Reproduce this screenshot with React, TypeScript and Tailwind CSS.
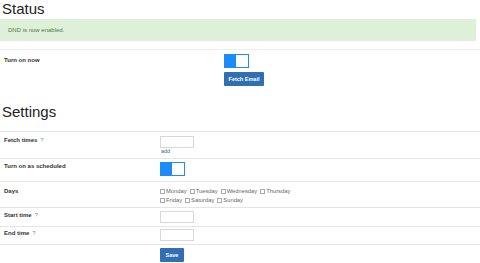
import React from "react";

const font = { fontFamily: '"Liberation Sans", Arial, sans-serif' };

function Toggle() {
  return (
    <div className="flex h-[14px] w-[25px] border border-[#1d8cf8] bg-white">
      <div className="w-[11px] bg-[#1d8cf8]" />
      <div className="flex-1" />
    </div>
  );
}

function Help() {
  return <span className="ml-[3px] font-normal text-[#7a8fa8]">?</span>;
}

function Row({ label, help, children, cls }: { label: string; help?: boolean; children: React.ReactNode; cls?: string }) {
  return (
    <div className={`flex border-t border-[#e5e5e5] ${cls ?? ""}`}>
      <div className="w-[160px] shrink-0 pl-[4px] text-[6px] font-bold text-[#333]">
        {label}
        {help && <Help />}
      </div>
      <div className="flex flex-col items-start text-[6px]">{children}</div>
    </div>
  );
}

function Input() {
  return <div className="h-[12px] w-[34px] border border-[#d8d8d8] bg-white" />;
}

function Check({ label }: { label: string }) {
  return (
    <span className="mr-[3px] inline-flex items-center">
      <span className="mr-[1px] inline-block h-[5px] w-[5px] border border-[#aaa]" />
      {label}
    </span>
  );
}

export default function App() {
  return (
    <div className="h-[263px] w-[480px] overflow-hidden bg-white text-[#333]" style={font}>
      <h1 className="pl-[2px] pt-[1px] text-[15px] leading-[16px] text-[#222]">Status</h1>
      <div className="mt-[2px] mr-[4px] h-[22px] bg-[#dff0d8] pl-[8px] text-[6px] leading-[22px] text-[#4a7a4a]">
        DND is now enabled.
      </div>
      <div className="mt-[8px] flex border-t border-[#eeeeee] pt-[6px]">
        <div className="w-[224px] shrink-0 pl-[4px] text-[6px] font-bold">Turn on now</div>
        <div className="-mt-[2px] flex flex-col gap-[4px]">
          <Toggle />
          <button className="h-[14px] w-[40px] rounded-[1px] bg-[#2f6fb2] text-[5.5px] font-bold text-white">
            Fetch Email
          </button>
        </div>
      </div>

      <h2 className="mt-[18px] pl-[2px] text-[15px] leading-[16px] text-[#222]">Settings</h2>
      <div className="mt-[11px]">
        <Row label="Fetch times" help cls="pt-[4px] h-[27px]">
          <Input />
          <div className="-mt-[1px] pl-[1px] text-[5.5px] leading-[8px] text-[#3a64a8]">add</div>
        </Row>
        <Row label="Turn on as scheduled" help={false} cls="pt-[3px] h-[23px]">
          <Toggle />
        </Row>
        <Row label="Days" cls="pt-[5px] h-[26px]">
          <div className="text-[5.8px] leading-[8.5px] text-[#666]">
            <div>
              <Check label="Monday" />
              <Check label="Tuesday" />
              <Check label="Wednesday" />
              <Check label="Thursday" />
            </div>
            <div>
              <Check label="Friday" />
              <Check label="Saturday" />
              <Check label="Sunday" />
            </div>
          </div>
        </Row>
        <Row label="Start time" help cls="pt-[3px] h-[19px]">
          <Input />
        </Row>
        <Row label="End time" help cls="pt-[2px] h-[18px]">
          <Input />
        </Row>
        <Row label="" cls="pt-[3px]">
          <button className="h-[14px] w-[24px] rounded-[1px] bg-[#2f6fb2] text-[5.5px] font-bold text-white">
            Save
          </button>
        </Row>
      </div>
    </div>
  );
}
